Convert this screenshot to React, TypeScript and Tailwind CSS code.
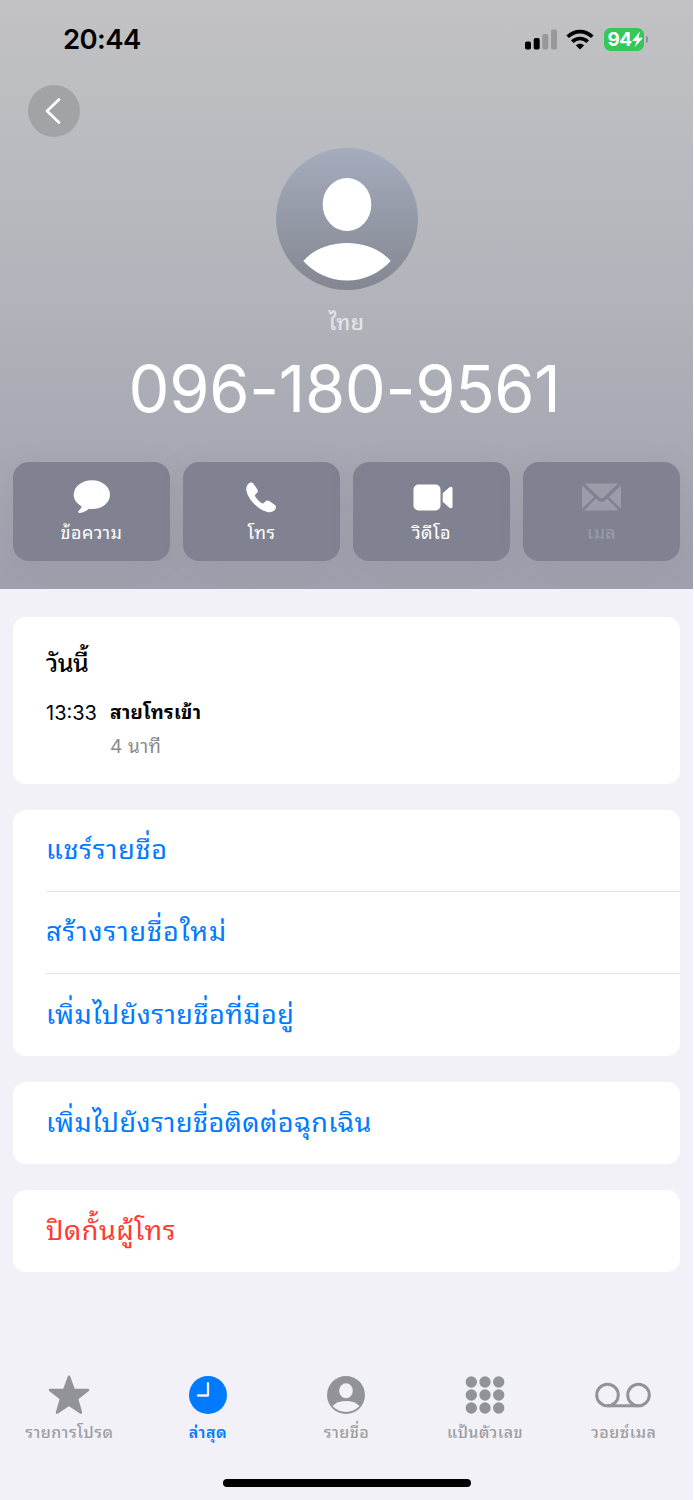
import type { ReactNode } from "react";

const actions = [
  { label: "ข้อความ", icon: <MessageIcon /> },
  { label: "โทร", icon: <PhoneIcon /> },
  { label: "วิดีโอ", icon: <VideoIcon /> },
  { label: "เมล", icon: <MailIcon />, disabled: true }
];

const tabs = [
  { label: "รายการโปรด", icon: <StarIcon /> },
  { label: "ล่าสุด", icon: <ClockIcon />, active: true },
  { label: "รายชื่อ", icon: <ContactIcon /> },
  { label: "แป้นตัวเลข", icon: <KeypadIcon /> },
  { label: "วอยซ์เมล", icon: <VoicemailIcon /> }
];

function MessageIcon() {
  return (
    <svg width="38" height="34" viewBox="0 0 38 34" fill="currentColor">
      <path d="M19 0.3C29 0.3 37 6.600 37 14.700S29 29 19.200 29c-1.200 0-2.200 0-3.200-.2C12.800 31.200 9.500 33 6.300 33c-1.200 0-1.500-1.100-.7-1.900 1.400-1.500 2.700-3.100 2.900-4.900C3.900 23.700.7 19.700.7 14.700.7 6.600 9 .3 19 .3Z" />
    </svg>
  );
}

function PhoneIcon() {
  return (
    <svg className="-ml-[2px]" width="30" height="31" viewBox="0 0 30 31" fill="currentColor">
      <path d="M2.300 1.900C3.900.2 6.200.1 7.600 2l3.500 4.900c1.100 1.600.9 3.100-.4 4.400L9.300 12.700c-.5.5-.5 1-.2 1.600 1.500 2.700 4.300 5.500 7 7 .6.3 1.100.3 1.600-.2l1.600-1.500c1.200-1.200 2.800-1.300 4.300-.3l5 3.500c1.900 1.400 1.700 3.600.2 5.200-2 2-4.500 2.500-7.400 1.900C12.600 28.100 2.500 18.200.5 9.100-.1 6.300.4 3.800 2.300 1.900Z" />
    </svg>
  );
}

function VideoIcon() {
  return (
    <svg className="ml-[3px]" width="40" height="27" viewBox="0 0 40 27" fill="currentColor">
      <rect x="0.500" y="0.500" width="27" height="26" rx="5" />
      <path d="M29.700 9.200 36.500 3.300c1.300-1.100 3-.6 3 1.100v18.200c0 1.700-1.700 2.200-3 1.100l-6.800-5.900Z" />
    </svg>
  );
}

function MailIcon() {
  return (
    <svg width="39" height="28" viewBox="0 0 39 28" fill="currentColor">
      <path d="M2.800.5h33.400L21.800 14.300c-1.500 1.400-3.100 1.400-4.600 0Z" />
      <path d="M0 2.500 12.200 14 0 25.700ZM39 2.500 26.800 14 39 25.700Z" />
      <path d="m14 15.600 1.700 1.600c2.500 2.200 5.100 2.200 7.600 0l1.700-1.600 12 12H2Z" />
    </svg>
  );
}

function StarIcon() {
  return (
    <svg width="42" height="40" viewBox="0 0 42 40" fill="currentColor" stroke="currentColor" strokeWidth="2.500" strokeLinejoin="round">
      <path d="M21 1.700 25.800 15H40L29 23.700 33 37.600 21 29.700 9 37.600 13 23.700 2 15H16.200Z" />
    </svg>
  );
}

function ClockIcon() {
  return (
    <svg width="38" height="38" viewBox="0 0 38 38">
      <circle cx="19" cy="19" r="19" fill="currentColor" />
      <path d="M19 7.200V19.500H9" fill="none" stroke="#f2f1f7" strokeWidth="2.300" strokeLinecap="round" strokeLinejoin="round" />
    </svg>
  );
}

function ContactIcon() {
  return (
    <svg width="38" height="38" viewBox="0 0 38 38">
      <circle cx="19" cy="19" r="19" fill="currentColor" />
      <ellipse cx="19" cy="14.800" rx="6.800" ry="7.500" fill="#f2f1f7" />
      <path d="M5.500 30C8.400 26.700 13.200 24.900 19 24.900s10.600 1.800 13.500 5.100C29 33.900 24 35.900 19 35.900S9 33.900 5.500 30Z" fill="#f2f1f7" />
    </svg>
  );
}

function KeypadIcon() {
  return (
    <svg width="40" height="38" viewBox="0 0 40 38" fill="currentColor">
      {[6, 19, 32].map((y) => [6.3, 20, 33.7].map((x) => <circle key={`${x}-${y}`} cx={x} cy={y} r="5.700" />))}
    </svg>
  );
}

function VoicemailIcon() {
  return (
    <svg className="-ml-px" width="56" height="26" viewBox="0 0 56 26" fill="none" stroke="currentColor" strokeWidth="3">
      <circle cx="12.500" cy="13" r="10.800" />
      <circle cx="43.500" cy="13" r="10.800" />
      <path d="M12.500 23.800h31" />
    </svg>
  );
}

function StatusBar() {
  return (
    <div className="flex h-[78px] items-center justify-between pr-[45px] pl-[63px]">
      <span className="mt-[2px] text-[27.500px] font-semibold tracking-[-0.600px] text-black">20:44</span>
      <div className="flex items-center">
        <svg width="32" height="21" viewBox="0 0 32 21">
          <rect x="0" y="12.500" width="6" height="8" rx="1.800" />
          <rect x="8.700" y="9" width="6" height="11.500" rx="1.800" />
          <rect x="17.300" y="5" width="6" height="15.500" rx="1.800" fill="#98989c" />
          <rect x="26" y="0.500" width="6" height="20" rx="1.800" fill="#98989c" />
        </svg>
        <svg className="ml-[9px]" width="28" height="21" viewBox="0 0 28 21" fill="none" stroke="#000" strokeWidth="3.700">
          <path d="M1.700 7.800C8.700.8 19.300.8 26.300 7.800" />
          <path d="M6.300 12.700c4.300-4.300 11.100-4.300 15.400 0" />
          <path d="M14 20.500 9.800 16.300c2.400-2.200 6-2.200 8.400 0Z" fill="#000" stroke="none" />
        </svg>
        <div className="ml-[10px] flex h-[23px] w-[40px] items-center rounded-[6.500px] bg-[#34c759] pl-[4px] text-white">
          <span className="text-[19px] leading-none font-bold tracking-[-0.500px]">94</span>
          <svg width="11" height="17" viewBox="0 0 11 17" fill="currentColor">
            <path d="M8 .5.600 9.300c-.3.400-.1.800.4.800h3.700L2.600 16.300 10.400 7.600c.3-.4.100-.8-.4-.8H6.400Z" />
          </svg>
        </div>
        <span className="ml-[2px] h-[7px] w-[2.500px] rounded-r-full bg-[#929296]" />
      </div>
    </div>
  );
}

function Card({ children, className = "" }: { children: ReactNode; className?: string }) {
  return <section className={`overflow-hidden rounded-[13px] bg-white pl-[33px] ${className}`}>{children}</section>;
}

function Row({ label, className = "" }: { label: string; className?: string }) {
  return (
    <button type="button" className={`flex h-[82px] w-full items-center text-left text-[27px] leading-[40px] ${className}`}>
      {label}
    </button>
  );
}

export default function App() {
  return (
    <div className="flex h-[1500px] w-[694px] flex-col overflow-hidden border-r border-white bg-[#f2f1f7] font-['Inter','Noto_Sans_Thai_Looped','Loma','Waree','Garuda',sans-serif]">
      <header className="h-[589px] shrink-0 bg-linear-to-b from-[#c2c2c5] via-[#b2b4bb] to-[#9d9fac]">
        <StatusBar />
        <button type="button" aria-label="Back" className="mt-[7px] ml-[28px] flex size-[52px] items-center justify-center rounded-full bg-[#a2a3a6] text-white">
          <svg className="-ml-[3px]" width="16" height="26" viewBox="0 0 16 26" fill="none" stroke="currentColor" strokeWidth="2.700" strokeLinecap="round" strokeLinejoin="round">
            <path d="M14 1.500 2 13l12 11.500" />
          </svg>
        </button>
        <div className="mt-[11px] flex flex-col items-center">
          <div className="size-[142px] overflow-hidden rounded-full bg-linear-to-b from-[#a5acbc] to-[#838791]">
            <svg width="142" height="142" viewBox="0 0 142 142" fill="#fff">
              <ellipse cx="71" cy="56.500" rx="24.300" ry="26.500" />
              <path d="M27.300 113C37 102 52.500 95 71 95s34 7 43.700 18C104 125 88 132.500 71 132.500S38 125 27.300 113Z" />
            </svg>
          </div>
          <p className="mt-[15px] h-[36px] text-[21px] leading-[36px] font-medium tracking-[0.500px] text-[#e3e4e8]">ไทย</p>
          <h1 className="mt-[8px] mr-[4px] h-[79px] text-[65px] leading-[80px] font-normal tracking-[-0.300px] whitespace-nowrap text-white">096-180-9561</h1>
        </div>
        <div className="mt-[34px] grid grid-cols-4 gap-[13px] px-[13px]">
          {actions.map((action) => (
            <button
              key={action.label}
              type="button"
              disabled={action.disabled}
              className={`flex h-[99px] flex-col items-center rounded-[16px] bg-[#808292] pt-[15px] shadow-[0_2px_24px_rgba(110,112,128,0.120)] ${action.disabled ? "text-[#9b9ca9]" : "text-white"}`}
            >
              <span className="flex h-[40px] items-center justify-center">{action.icon}</span>
              <span className="text-[18px] leading-[32px] tracking-[0.450px]">{action.label}</span>
            </button>
          ))}
        </div>
      </header>

      <main className="flex flex-col gap-[26px] px-[13px] pt-[28px]">
        <Card className="h-[166.500px] pt-[26px]">
          <h2 className="h-[40px] text-[25px] leading-[40px] font-medium tracking-[-0.500px] text-black">วันนี้</h2>
          <div className="mt-[13px] flex text-[20px] leading-[34px]">
            <span className="w-[64px] text-black">13:33</span>
            <div>
              <p className="text-[19px] font-bold tracking-[0.350px] text-black">สายโทรเข้า</p>
              <p className="text-[19px] tracking-[0.250px] text-[#8a8a8e]">4 นาที</p>
            </div>
          </div>
        </Card>
        <Card className="divide-y divide-[#e2e2e4]">
          <Row label="แชร์รายชื่อ" className="tracking-[0.700px] text-[#007aff]" />
          <Row label="สร้างรายชื่อใหม่" className="tracking-[0.950px] text-[#007aff]" />
          <Row label="เพิ่มไปยังรายชื่อที่มีอยู่" className="tracking-[0.500px] text-[#007aff]" />
        </Card>
        <Card>
          <Row label="เพิ่มไปยังรายชื่อติดต่อฉุกเฉิน" className="tracking-[0.450px] text-[#007aff]" />
        </Card>
        <Card>
          <Row label="ปิดกั้นผู้โทร" className="tracking-[0.550px] text-[#ff3b30]" />
        </Card>
      </main>

      <nav className="mt-auto grid h-[104.500px] shrink-0 grid-cols-5">
        {tabs.map((tab) => (
          <button key={tab.label} type="button" className={`flex flex-col items-center ${tab.active ? "text-[#007aff]" : "text-[#929398]"}`}>
            <span className="flex h-[41px] items-center justify-center">{tab.icon}</span>
            <span className={`text-[16px] leading-[32px] tracking-[0.500px] whitespace-nowrap ${tab.active ? "font-semibold" : "font-medium text-[#9c9ca1]"}`}>{tab.label}</span>
          </button>
        ))}
      </nav>
      <div className="mx-auto mb-[13px] h-[8px] w-[248px] shrink-0 rounded-full bg-black" />
    </div>
  );
}
